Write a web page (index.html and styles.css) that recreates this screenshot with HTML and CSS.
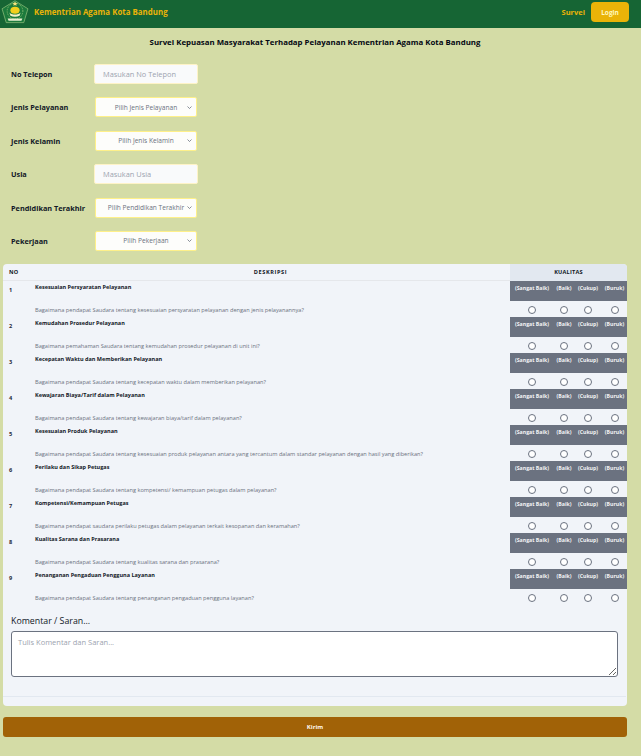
FILE: index.html
```html
<!DOCTYPE html>
<html lang="id">
<head>
<meta charset="utf-8">
<title>Survei Kepuasan Masyarakat</title>
<link rel="stylesheet" href="styles.css">
</head>
<body>
<header class="topbar">
  <div class="brand">
    <svg class="logo" viewBox="0 0 30 26" aria-hidden="true">
      <path d="M15 .8 29 9.5 24.500 24.500H5.500L1 9.500Z" fill="#1c7a3c" stroke="#8fbf7a" stroke-width=".8"/>
      <circle cx="15" cy="12" r="8.500" fill="none" stroke="#bcd98a" stroke-width=".7" stroke-dasharray="1 1"/>
      <path d="M15 1.800l1 1.500 1.600.2-1.200 1 .4 1.600-1.800-.8-1.800.8.4-1.600-1.200-1 1.600-.2Z" fill="#f6e27a"/>
      <ellipse cx="15" cy="11" rx="5" ry="3.800" fill="#f2cf1d"/>
      <path d="M9 13.500c2 3 10 3 12 0l-1 3.500c-3 1.500-7 1.500-10 0Z" fill="#f4f1c8"/>
      <path d="M7 20h16l-1 2.500H8Z" fill="#e8efd0"/>
    </svg>
    <span class="brand-name">Kementrian Agama Kota Bandung</span>
  </div>
  <nav class="nav">
    <a class="nav-link" href="#">Survei</a>
    <a class="login" href="#">Login</a>
  </nav>
</header>

<main class="page">
  <h1 class="title">Survei Kepuasan Masyarakat Terhadap Pelayanan Kementrian Agama Kota Bandung</h1>

  <form class="fields">
    <div class="field">
      <label class="field-label">No Telepon</label>
      <input class="control" type="text" placeholder="Masukan No Telepon">
    </div>
    <div class="field">
      <label class="field-label">Jenis Pelayanan</label>
      <div class="select"><span class="select-text">Pilih Jenis Pelayanan</span><svg class="chev" viewBox="0 0 10 6"><path d="M1 1l4 4 4-4" fill="none" stroke="#4b5563" stroke-width="1.300"/></svg></div>
    </div>
    <div class="field">
      <label class="field-label">Jenis Kelamin</label>
      <div class="select"><span class="select-text">Pilih Jenis Kelamin</span><svg class="chev" viewBox="0 0 10 6"><path d="M1 1l4 4 4-4" fill="none" stroke="#4b5563" stroke-width="1.300"/></svg></div>
    </div>
    <div class="field">
      <label class="field-label">Usia</label>
      <input class="control" type="text" placeholder="Masukan Usia">
    </div>
    <div class="field">
      <label class="field-label">Pendidikan Terakhir</label>
      <div class="select"><span class="select-text">Pilih Pendidikan Terakhir</span><svg class="chev" viewBox="0 0 10 6"><path d="M1 1l4 4 4-4" fill="none" stroke="#4b5563" stroke-width="1.300"/></svg></div>
    </div>
    <div class="field">
      <label class="field-label">Pekerjaan</label>
      <div class="select"><span class="select-text">Pilih Pekerjaan</span><svg class="chev" viewBox="0 0 10 6"><path d="M1 1l4 4 4-4" fill="none" stroke="#4b5563" stroke-width="1.300"/></svg></div>
    </div>
  </form>

  <section class="card">
    <div class="thead">
      <div class="th th-no">NO</div>
      <div class="th th-desc">DESKRIPSI</div>
      <div class="th th-q">KUALITAS</div>
    </div>

    <div class="row">
      <div class="no">1</div>
      <div class="desc"><strong class="q-title">Kesesuaian Persyaratan Pelayanan</strong><p class="q-text">Bagaimana pendapat Saudara tentang kesesuaian persyaratan pelayanan dengan jenis pelayanannya?</p></div>
      <div class="rate"><div class="rate-head"><span>(Sangat Baik)</span><span>(Baik)</span><span>(Cukup)</span><span>(Buruk)</span></div><div class="rate-radios"><span class="radio"></span><span class="radio"></span><span class="radio"></span><span class="radio"></span></div></div>
    </div>
    <div class="row">
      <div class="no">2</div>
      <div class="desc"><strong class="q-title">Kemudahan Prosedur Pelayanan</strong><p class="q-text">Bagaimana pemahaman Saudara tentang kemudahan prosedur pelayanan di unit ini?</p></div>
      <div class="rate"><div class="rate-head"><span>(Sangat Baik)</span><span>(Baik)</span><span>(Cukup)</span><span>(Buruk)</span></div><div class="rate-radios"><span class="radio"></span><span class="radio"></span><span class="radio"></span><span class="radio"></span></div></div>
    </div>
    <div class="row">
      <div class="no">3</div>
      <div class="desc"><strong class="q-title">Kecepatan Waktu dan Memberikan Pelayanan</strong><p class="q-text">Bagaimana pendapat Saudara tentang kecepatan waktu dalam memberikan pelayanan?</p></div>
      <div class="rate"><div class="rate-head"><span>(Sangat Baik)</span><span>(Baik)</span><span>(Cukup)</span><span>(Buruk)</span></div><div class="rate-radios"><span class="radio"></span><span class="radio"></span><span class="radio"></span><span class="radio"></span></div></div>
    </div>
    <div class="row">
      <div class="no">4</div>
      <div class="desc"><strong class="q-title">Kewajaran Biaya/Tarif dalam Pelayanan</strong><p class="q-text">Bagaimana pendapat Saudara tentang kewajaran biaya/tarif dalam pelayanan?</p></div>
      <div class="rate"><div class="rate-head"><span>(Sangat Baik)</span><span>(Baik)</span><span>(Cukup)</span><span>(Buruk)</span></div><div class="rate-radios"><span class="radio"></span><span class="radio"></span><span class="radio"></span><span class="radio"></span></div></div>
    </div>
    <div class="row">
      <div class="no">5</div>
      <div class="desc"><strong class="q-title">Kesesuaian Produk Pelayanan</strong><p class="q-text">Bagaimana pendapat Saudara tentang kesesuaian produk pelayanan antara yang tercantum dalam standar pelayanan dengan hasil yang diberikan?</p></div>
      <div class="rate"><div class="rate-head"><span>(Sangat Baik)</span><span>(Baik)</span><span>(Cukup)</span><span>(Buruk)</span></div><div class="rate-radios"><span class="radio"></span><span class="radio"></span><span class="radio"></span><span class="radio"></span></div></div>
    </div>
    <div class="row">
      <div class="no">6</div>
      <div class="desc"><strong class="q-title">Perilaku dan Sikap Petugas</strong><p class="q-text">Bagaimana pendapat Saudara tentang kompetensi/ kemampuan petugas dalam pelayanan?</p></div>
      <div class="rate"><div class="rate-head"><span>(Sangat Baik)</span><span>(Baik)</span><span>(Cukup)</span><span>(Buruk)</span></div><div class="rate-radios"><span class="radio"></span><span class="radio"></span><span class="radio"></span><span class="radio"></span></div></div>
    </div>
    <div class="row">
      <div class="no">7</div>
      <div class="desc"><strong class="q-title">Kompetensi/Kemampuan Petugas</strong><p class="q-text">Bagaimana pendapat saudara perilaku petugas dalam pelayanan terkait kesopanan dan keramahan?</p></div>
      <div class="rate"><div class="rate-head"><span>(Sangat Baik)</span><span>(Baik)</span><span>(Cukup)</span><span>(Buruk)</span></div><div class="rate-radios"><span class="radio"></span><span class="radio"></span><span class="radio"></span><span class="radio"></span></div></div>
    </div>
    <div class="row">
      <div class="no">8</div>
      <div class="desc"><strong class="q-title">Kualitas Sarana dan Prasarana</strong><p class="q-text">Bagaimana pendapat Saudara tentang kualitas sarana dan prasarana?</p></div>
      <div class="rate"><div class="rate-head"><span>(Sangat Baik)</span><span>(Baik)</span><span>(Cukup)</span><span>(Buruk)</span></div><div class="rate-radios"><span class="radio"></span><span class="radio"></span><span class="radio"></span><span class="radio"></span></div></div>
    </div>
    <div class="row">
      <div class="no">9</div>
      <div class="desc"><strong class="q-title">Penanganan Pengaduan Pengguna Layanan</strong><p class="q-text">Bagaimana pendapat Saudara tentang penanganan pengaduan pengguna layanan?</p></div>
      <div class="rate"><div class="rate-head"><span>(Sangat Baik)</span><span>(Baik)</span><span>(Cukup)</span><span>(Buruk)</span></div><div class="rate-radios"><span class="radio"></span><span class="radio"></span><span class="radio"></span><span class="radio"></span></div></div>
    </div>

    <div class="comment">
      <label class="comment-label">Komentar / Saran...</label>
      <textarea class="comment-box" placeholder="Tulis Komentar dan Saran..."></textarea>
    </div>
    <div class="card-foot"></div>
  </section>

  <button class="submit" type="button">Kirim</button>
</main>
</body>
</html>
```

FILE: styles.css
```css
* { box-sizing: border-box; }
html, body { margin: 0; padding: 0; }
body {
  height: 756px;
  overflow: hidden;
  background: #d4dca6;
  font-family: "Open Sans", "Noto Sans", sans-serif;
  color: #111827;
}
.topbar {
  height: 28px;
  background: #166534;
  display: flex;
  align-items: center;
  justify-content: space-between;
  padding: 0 12px 4px 1px;
}
.brand { display: flex; align-items: center; gap: 5px; }
.logo { width: 28px; height: 24px; display: block; }
.brand-name { color: #eab308; font-size: 7.900px; font-weight: 700; }
.nav { display: flex; align-items: center; gap: 6px; }
.nav-link { color: #eab308; font-size: 7.500px; font-weight: 700; text-decoration: none; }
.login {
  width: 38px;
  height: 20px;
  background: #eab308;
  color: #fef9c3;
  border-radius: 4px;
  font-size: 6.500px;
  font-weight: 700;
  display: flex;
  align-items: center;
  justify-content: center;
  text-decoration: none;
}
.page { padding: 0 14px 0 3px; }
.title {
  margin: 0;
  height: 36px;
  padding-top: 8px;
  line-height: 12px;
  font-size: 7.850px;
  font-weight: 700;
  text-align: center;
  color: #030712;
}
.fields { display: flex; flex-direction: column; gap: 13.400px; padding-left: 8px; }
.field { display: flex; align-items: center; height: 20px; }
.field-label { width: 84px; font-size: 7.300px; font-weight: 700; }
.control, .select {
  height: 20px;
  border-radius: 2px;
  font-family: inherit;
}
.control {
  width: 104px;
  margin-left: -1px;
  padding: 0 8px;
  border: 1px solid #fef3c7;
  background: #f9fafb;
  font-size: 7.400px;
  color: #111827;
  outline: none;
}
.control::placeholder { color: #9ca3af; }
.select {
  width: 102px;
  display: flex;
  align-items: center;
  justify-content: flex-end;
  padding-right: 4px;
  border: 1px solid #fef08a;
  background: #fdfdfb;
}
.select-text {
  flex: 1;
  text-align: center;
  font-size: 6.600px;
  color: #6b7280;
  white-space: nowrap;
  padding-left: 10px;
}
.chev { width: 5px; height: 3px; flex: none; margin-left: 1px; }

.card {
  margin-top: 13px;
  width: 624px;
  background: #f1f4f9;
  border-radius: 4px;
  overflow: hidden;
}
.thead {
  display: grid;
  grid-template-columns: 32px 475px 117px;
  height: 17px;
  border-bottom: 1px solid #e5e7eb;
}
.th {
  font-size: 5.600px;
  font-weight: 700;
  display: flex;
  align-items: center;
  justify-content: center;
  letter-spacing: .2px;
}
.th-no { justify-content: flex-start; padding-left: 6px; }
.th-desc { padding-right: 4px; letter-spacing: .6px; }
.th-q { background: #e2e8f0; height: 17px; }
.row {
  display: grid;
  grid-template-columns: 32px 475px 117px;
  height: 36px;
}
.no { font-size: 5.600px; font-weight: 700; padding: 5px 0 0 6px; color: #1f2937; }
.desc { display: flex; flex-direction: column; justify-content: space-between; padding: 1px 0 2px; }
.q-title { font-size: 5.500px; font-weight: 700; line-height: 10px; color: #111827; }
.q-text { margin: 0; font-size: 5.650px; line-height: 9px; color: #6b7280; white-space: nowrap; }
.rate { display: flex; flex-direction: column; }
.rate-head, .rate-radios {
  display: grid;
  grid-template-columns: 44px 20px 28px 25px;
}
.rate-head {
  height: 20px;
  background: #6b7280;
  padding-bottom: 6px;
  align-items: center;
}
.rate-head span {
  color: #f3f4f6;
  font-size: 5.200px;
  font-weight: 700;
  text-align: center;
  white-space: nowrap;
}
.rate-radios { height: 16px; align-items: center; justify-items: center; padding-top: 2px; }
.radio {
  display: block;
  width: 8px;
  height: 8px;
  border-radius: 50%;
  border: 1px solid #6b7280;
  background: #fff;
}
.comment { padding: 8px 9px 0 8px; }
.comment-label { display: block; font-size: 8.800px; line-height: 13px; height: 18px; color: #111827; padding-top: 2px; }
.comment-box {
  display: block;
  width: 607px;
  height: 46px;
  margin: 0;
  padding: 5px 6px;
  border: 1px solid #6b7280;
  border-radius: 3px;
  background: #fff;
  font-family: inherit;
  font-size: 7.500px;
  outline: none;
}
.comment-box::placeholder { color: #9ca3af; }
.card-foot { height: 20px; border-bottom: 1px solid #e2e8f0; margin-bottom: 9px; margin-right: 1px; }
.submit {
  display: block;
  margin-top: 11px;
  width: 624px;
  height: 20px;
  background: #a16207;
  color: #fff7ed;
  border: none;
  border-radius: 3px;
  font-family: inherit;
  font-size: 6px;
  font-weight: 700;
}
```
